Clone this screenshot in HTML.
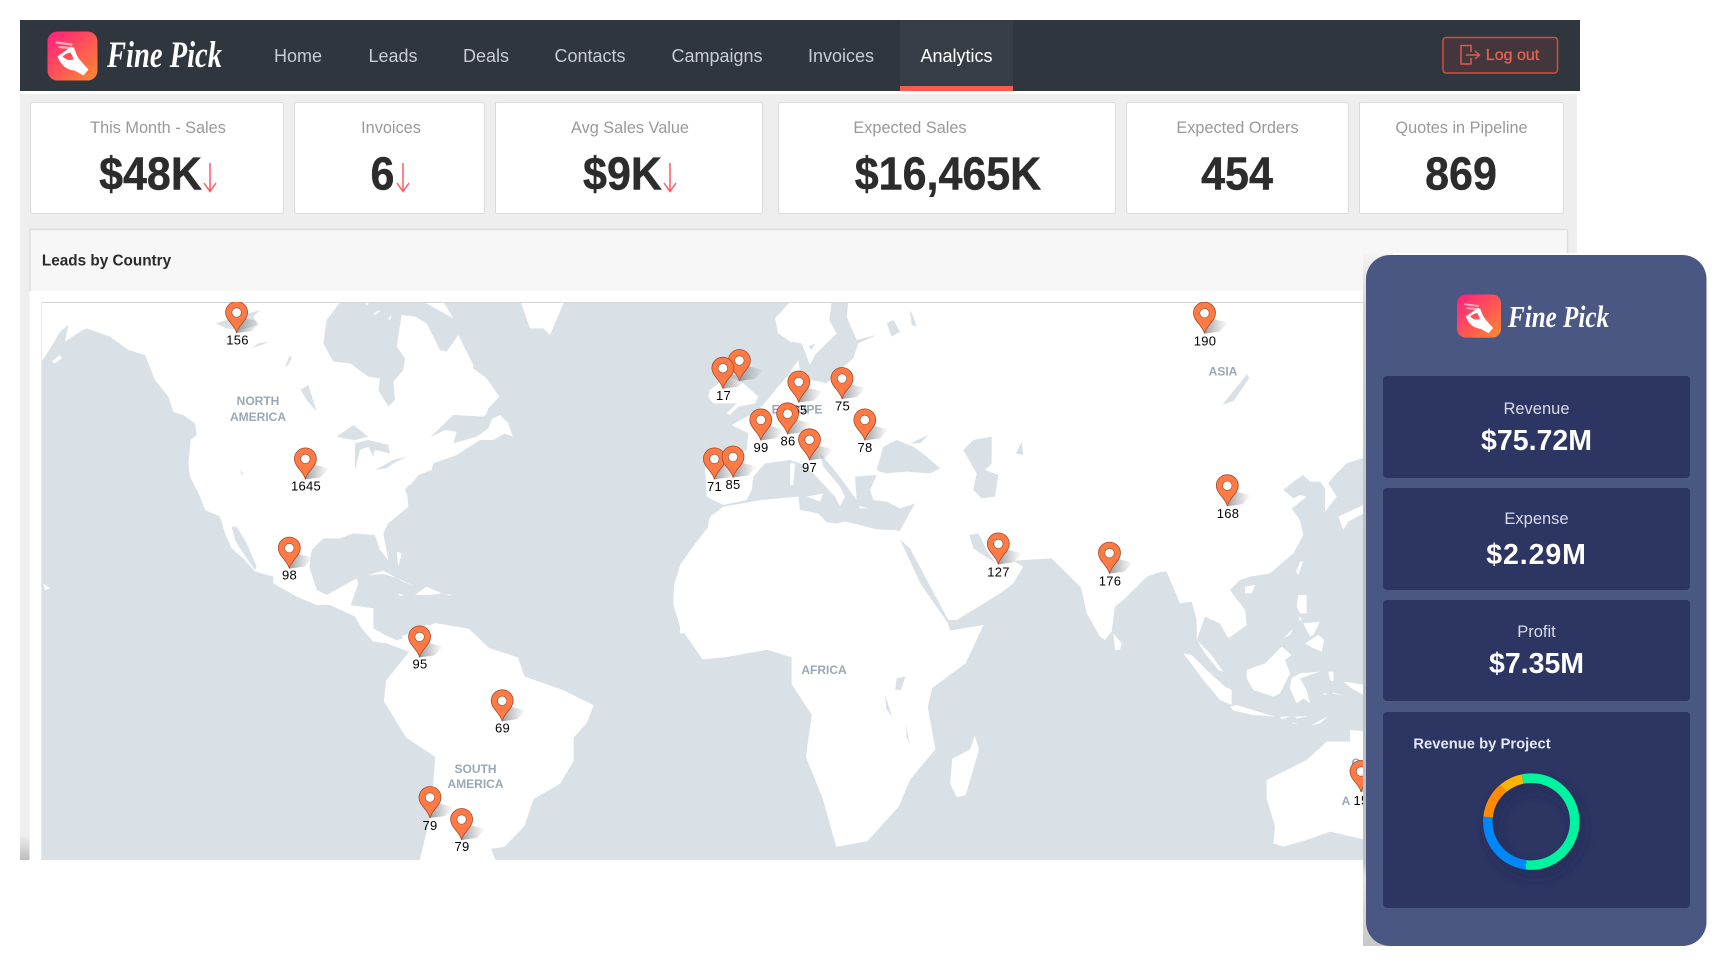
<!DOCTYPE html>
<html>
<head>
<meta charset="utf-8">
<title>Fine Pick</title>
<style>
html,body{margin:0;padding:0;background:#fff}
body{width:1722px;height:965px;position:relative;overflow:hidden;font-family:"Liberation Sans",sans-serif}
.a{position:absolute}
.t{position:absolute;transform:translate(-50%,-50%);white-space:nowrap;line-height:1}
.nav{font-size:18px;color:#c9ccd0;top:55.500px}
.card{position:absolute;top:102px;height:110px;background:#fff;border:1px solid #dcdcdc;border-radius:2px}
.lab{font-size:16.3px;color:#999;top:128px}
.val{font-size:43px;font-weight:bold;color:#2c2c2c;top:175px;transform:translate(-50%,-50%) scaleY(1.08);-webkit-text-stroke:.4px #2c2c2c}
.pc{position:absolute;left:1383px;width:307px;background:#2d3563;border-radius:4px}
.pl{font-size:16.5px;color:#d8dbe8;left:1536.5px}
.pv{font-size:28.5px;font-weight:bold;color:#fff;left:1536.5px}
svg text{font-family:"Liberation Sans",sans-serif}
</style>
</head>
<body>
<!-- page bg -->
<div class="a" style="left:20px;top:94px;width:1557px;height:766px;background:#eee"></div>
<div class="a" style="left:20px;top:835px;width:22px;height:25px;background:linear-gradient(to top,#bdbdbd,#eee)"></div>

<!-- nav -->
<div class="a" style="left:20px;top:20px;width:1560px;height:71px;background:#30363e"></div>
<div class="a" style="left:900px;top:20px;width:113px;height:66px;background:#373d47"></div>
<div class="a" style="left:900px;top:86px;width:113px;height:5px;background:#fb5a4c"></div>

<svg class="a" style="left:0;top:0" width="1722" height="965" viewBox="0 0 1722 965">
  <defs>
    <linearGradient id="lg" x1="0" y1="0" x2="1" y2="1">
      <stop offset="0" stop-color="#ff1c80"/><stop offset="1" stop-color="#ff8a2e"/>
    </linearGradient>
    <linearGradient id="sh" x1="0" y1="0" x2="1" y2="0">
      <stop offset="0" stop-color="#7a7f84" stop-opacity=".75"/><stop offset="1" stop-color="#9a9a9a" stop-opacity="0"/>
    </linearGradient>
    <linearGradient id="strip" x1="0" y1="0" x2="0" y2="1">
      <stop offset="0" stop-color="#f4f4f4"/><stop offset=".08" stop-color="#d4d4d4"/><stop offset=".4" stop-color="#bcbfc2"/><stop offset=".88" stop-color="#bcbfc2"/><stop offset=".9" stop-color="#e2e2e2"/><stop offset="1" stop-color="#c8c8c8"/>
    </linearGradient>
    <g id="hand">
      <rect x="0" y="0" width="50" height="49" rx="10" fill="url(#lg)"/>
      <path d="M9,11 L24,13 M12,15.500 L26,17" stroke="#fff" stroke-opacity=".55" stroke-width="2.200" fill="none" stroke-linecap="round"/>
      <path fill-rule="evenodd" fill="#fff" d="M10,25 L24,15 Q27,17 28,20 Q29,24 32,28 L41,38 L36,44 L27,39 Q15,38 10,25 Z M15,25 Q20,30 26,28 Q25,24 23,21 Q18,22 15,25 Z"/>
    </g>
    <g id="pin">
      <path d="M0,0 L7,-15 L24,-11 L15,-2 Z" fill="url(#sh)"/>
      <path d="M0,0 C-1.500,-8 -11,-12.500 -11,-20.500 A11,11 0 1 1 11,-20.500 C11,-12.500 1.500,-8 0,0 Z" fill="#ff7a45" stroke="#a3492c" stroke-width=".8"/>
      <circle cx="0" cy="-20.500" r="4.700" fill="#fff" stroke="#8a4a30" stroke-width=".6"/>
    </g>
    <clipPath id="mc"><rect x="41.500" y="302" width="1321.500" height="558"/></clipPath>
  </defs>

  <!-- logo -->
  <use href="#hand" x="47.500" y="31.500"/>
  <text x="107" y="67" font-size="37" fill="#fff" textLength="115" lengthAdjust="spacingAndGlyphs" style="font-family:'Liberation Serif',serif;font-style:italic;font-weight:bold">Fine Pick</text>

  <!-- logout -->
  <rect x="1443" y="37.500" width="114.500" height="35.500" rx="3" fill="#43363c" stroke="#d14d3d" stroke-width="1.500"/>
  <path d="M1471,52 V45.500 H1461 V64 H1471 V58 M1466,55 H1479 M1475,51 L1479.500,55 L1475,59" fill="none" stroke="#e05a49" stroke-width="1.500"/>

  <!-- leads panel -->
  <rect x="29.500" y="229" width="1538" height="640" fill="#fff"/>
  <rect x="29.500" y="229" width="1538" height="62" fill="#f7f7f7"/>
  <path d="M30,291 V229.500 H1567.500 V291" fill="none" stroke="#dedede" stroke-width="1.500"/>
  <rect x="20" y="860" width="1343" height="105" fill="#fff"/>

  <!-- map -->
  <g clip-path="url(#mc)">
    <rect x="41.500" y="302" width="1321.500" height="558" fill="#d9e0e6"/>

    <!-- North America -->
    <g transform="translate(40,300) scale(.33333)" fill="#fff">
      <path d="M5,0 L905,0 L860,60 L850,130 L880,185 L930,190 L985,230 L1020,235 L1015,270 L1045,320 L1065,300 L1060,245 L1090,210 L1095,175 L1070,140 L1085,45 L1125,50 L1160,70 L1200,150 L1220,155 L1255,105 L1300,195 L1300,205 L1340,235 L1378,290 L1345,325 L1330,370 L1380,345 L1405,370 L1418,410 L1395,400 L1360,420 L1320,420 L1250,465 L1180,490 L1175,510 L1135,525 L1100,570 L1105,620 L1045,670 L1030,700 L1045,780 L1020,750 L1005,705 L940,700 L900,715 L850,715 L815,750 L808,800 L830,870 L860,885 L905,860 L950,835 L955,850 L932,915 L1000,925 L1000,985 L1045,1010 L1070,1020 L1115,1010 L1165,970 L1120,1060 L1040,1030 L1000,1025 L965,985 L945,950 L870,915 L830,915 L770,890 L700,850 L700,830 L645,815 L610,775 L575,745 L555,700 L540,650 L495,630 L480,590 L450,530 L445,490 L452,420 L470,405 L465,370 L400,335 L385,290 L345,240 L315,165 L265,150 L210,110 L140,85 L120,95 L75,125 L85,75 L60,95 L40,130 L5,185 Z"/>
      <path d="M1440,0 L1575,0 L1530,105 L1510,85 L1470,85 Z"/>
      <path d="M1150,5 L1210,5 L1240,55 Z M975,5 L990,5 L980,18 Z"/>
      <path d="M1000,40 L1020,30 L1020,35 L1005,45 Z M1045,55 L1055,45 L1050,62 Z"/>
      <path d="M35,185 L60,165 L65,175 L45,190 Z M10,850 L30,865 L15,870 Z"/>
      <path d="M985,825 L1030,812 L1090,845 L1125,860 L1075,835 L1030,822 Z M1125,885 L1160,860 L1205,880 L1170,885 Z M1075,880 L1095,885 L1080,888 Z M1220,882 L1240,885 L1225,886 Z M1070,755 L1085,760 L1075,800 Z"/>
      <g fill="#d9e0e6">
        <path d="M575,680 L590,680 L620,730 L650,800 L645,810 L600,745 L585,720 Z"/>
        <path d="M527,70 L560,60 L660,30 L640,50 L655,75 L600,90 L560,85 Z M635,145 L690,125 L655,130 Z"/>
        <path d="M735,200 L750,165 L755,175 L745,195 Z M770,255 L780,270 L805,255 L830,335 L800,300 L785,275 Z"/>
        <path d="M325,260 L340,258 L350,300 L335,285 Z M395,335 L430,345 L465,370 L470,405 L440,365 Z M600,510 L612,525 L603,522 Z"/>
        <path d="M890,410 L940,375 L985,410 L945,420 L910,415 Z"/>
        <path d="M945,430 L985,420 L1045,435 L1050,460 L1005,450 L1000,470 L985,440 L960,450 L945,510 Z"/>
        <path d="M1005,510 L1060,480 L1100,470 L1060,490 L1040,505 Z"/>
        <path d="M1170,412 L1240,345 L1330,350 L1375,310 L1345,385 L1310,410 L1240,430 L1250,395 L1215,390 Z"/>
        <path d="M1095,570 L1110,550 L1105,590 Z"/>
      </g>
    </g>

    <!-- South America, Africa south -->
    <g transform="translate(0,290) scale(.44643,.38270)" fill="#fff">
      <path d="M900,905 L975,870 L1050,885 L1095,935 L1160,960 L1175,1010 L1260,1045 L1330,1085 L1315,1130 L1285,1170 L1285,1230 L1255,1290 L1195,1330 L1175,1400 L1130,1455 L1100,1460 L1110,1490 L940,1490 L965,1370 L975,1220 L910,1170 L860,1075 L865,1020 L920,940 Z"/>
    </g>
    <g transform="translate(680,290) scale(.44643,.38270)" fill="#fff">
      <path d="M500,630 L515,660 L490,645 L540,770 L600,870 L605,890 L680,875 L640,975 L565,1040 L555,1090 L572,1200 L515,1280 L490,1350 L420,1440 L350,1455 L320,1330 L282,1220 L295,1110 L250,1030 L250,960 L195,940 L100,960 L50,965 L0,880 L-15,820 L-13,770 L0,720 L60,640 L65,600 L110,565 L200,550 L265,595 L350,610 L370,605 L440,625 Z"/>
      <path d="M660,1165 L670,1200 L640,1320 L620,1325 L605,1290 L610,1225 L650,1200 Z"/>
      <g fill="#d9e0e6">
        <path d="M485,1015 L505,1010 L495,1045 L482,1045 Z M460,1060 L475,1115 L462,1095 Z M505,1130 L515,1190 L508,1170 Z"/>
      </g>
    </g>

    <!-- Europe, west Asia -->
    <g transform="translate(680,300) scale(.33333)" fill="#fff">
      <path d="M0,795 L35,745 L85,680 L90,650 L130,620 L245,600 L355,590 L360,630 L415,640 L470,700 L490,680 L560,690 L650,690 L660,720 L680,800 L730,880 L770,960 L770,1000 L0,1000 Z"/>
      <path d="M505,6 L1260,6 L1260,880 L1210,870 L1150,810 L1115,775 L1000,782 L1030,800 L1000,850 L960,880 L830,960 L805,960 L735,830 L690,745 L650,710 L705,610 L660,625 L620,605 L580,600 L570,570 L590,525 L525,530 L530,600 L505,565 L455,500 L420,460 L430,500 L480,560 L495,590 L480,620 L465,590 L400,520 L360,490 L330,480 L255,490 L220,530 L215,570 L200,600 L130,615 L80,590 L75,500 L105,500 L200,450 L205,400 L155,375 L210,345 L245,320 L270,290 L290,265 L330,220 L355,215 L395,240 L440,250 L490,200 L520,175 L535,130 L590,105 L530,120 L500,50 Z"/>
      <path d="M285,55 L330,6 L455,6 L448,60 L470,100 L430,140 L405,165 L390,195 L365,130 L330,125 L295,100 Z"/>
      <path d="M330,215 L355,180 L360,215 Z"/>
      <path d="M90,270 L130,240 L150,230 L190,250 L235,290 L225,310 L175,320 L150,345 L140,340 L170,310 L100,310 L85,290 Z"/>
      <path d="M330,490 L345,490 L340,555 L330,555 Z M380,590 L430,580 L420,605 Z M535,618 L570,625 L540,625 Z"/>
      <g fill="#d9e0e6">
        <path d="M590,510 L610,440 L650,420 L700,440 L740,470 L780,505 L750,520 L680,515 L620,520 L600,515 Z"/>
        <path d="M690,430 L745,405 L720,430 Z"/>
        <path d="M850,450 L880,420 L935,410 L935,490 L915,510 L955,525 L945,590 L905,595 L880,570 L890,520 Z"/>
        <path d="M1008,460 L1025,425 L1030,465 Z M1215,440 L1260,415 L1225,430 Z"/>
        <path d="M868,705 L895,700 L925,760 L950,790 L925,775 L880,745 Z"/>
        <path d="M620,70 L640,60 L660,95 L635,110 Z M690,30 L700,50 L710,80 L695,75 Z M385,140 L405,130 L395,150 Z"/>
      </g>
    </g>

    <!-- Northern Asia fill -->
    <rect x="1095" y="302" width="268" height="145" fill="#fff"/>
    <g transform="translate(680,290) scale(.44643,.38270)" fill="#d9e0e6">
      <path d="M1270,220 L1215,300 L1240,290 L1275,230 Z"/>
    </g>

    <!-- East Asia / Oceania -->
    <g transform="translate(1080,440) scale(.33333)" fill="#fff">
      <path d="M0,430 L20,520 L60,590 L75,600 L95,575 L105,500 L130,480 L200,410 L245,395 L260,395 L300,490 L335,485 L350,540 L350,600 L375,530 L420,550 L445,595 L500,555 L495,510 L450,450 L480,420 L510,410 L570,400 L640,340 L670,285 L660,240 L635,205 L680,170 L660,165 L640,175 L610,150 L640,125 L670,105 L690,125 L720,125 L735,145 L735,215 L770,170 L745,130 L760,110 L800,70 L860,50 L860,-5 L0,-5 Z"/>
      <path d="M350,600 L390,640 L430,695 L415,690 L375,640 Z"/>
      <path d="M310,640 L335,645 L380,690 L435,740 L455,750 L455,795 L420,780 L370,720 L340,680 Z"/>
      <path d="M450,800 L470,795 L585,830 L520,825 L460,812 Z M600,830 L630,830 L605,838 Z M645,830 L685,828 L650,836 Z M635,845 L655,855 L640,850 Z M695,855 L745,828 L720,850 Z"/>
      <path d="M500,690 L555,670 L605,620 L635,645 L615,660 L630,700 L600,760 L580,770 L520,750 L500,715 Z"/>
      <path d="M635,715 L660,700 L720,695 L660,715 L680,750 L690,790 L670,775 L650,790 L630,745 Z"/>
      <path d="M655,465 L680,465 L680,520 L660,520 L650,500 Z M655,530 L665,535 L660,545 Z M670,550 L720,545 L700,585 L690,590 Z M675,610 L715,585 L733,600 L725,635 L700,625 Z"/>
      <path d="M660,365 L670,365 L655,405 L648,395 Z M495,440 L525,435 L515,460 L495,460 Z"/>
      <path d="M775,230 L860,190 L860,215 L805,245 L790,270 Z"/>
      <path d="M610,595 L640,565 L630,585 Z M745,695 L760,695 L760,725 L750,720 Z M790,725 L860,735 L860,770 L815,745 Z M730,760 L745,762 L730,765 Z M755,757 L790,765 L760,762 Z"/>
      <path d="M860,875 L810,870 L810,905 L740,905 L680,960 L600,1000 L560,1020 L560,1075 L585,1160 L580,1210 L610,1220 L680,1200 L750,1175 L860,1200 Z"/>
      <path d="M100,580 L125,610 L120,630 L105,630 Z"/>
    </g>

    <line x1="41.500" y1="302.500" x2="1363" y2="302.500" stroke="#d3d6d9"/>
    <line x1="41.500" y1="302" x2="41.500" y2="860" stroke="#d3d6d9"/>

    <!-- continent labels -->
    <g font-size="12" font-weight="bold" fill="#9aa8b5" text-anchor="middle">
      <text x="258" y="405">NORTH</text><text x="258" y="421">AMERICA</text>
      <text x="475.500" y="773">SOUTH</text><text x="475.500" y="788">AMERICA</text>
      <text x="797" y="413.500">EUROPE</text>
      <text x="824" y="674">AFRICA</text>
      <text x="1223" y="375.500">ASIA</text>
      <text x="1346" y="805">A</text><text x="1356" y="767">O</text>
    </g>
    <!-- pins -->
    <use href="#pin" x="236.600" y="333"/>
    <use href="#pin" x="305.400" y="479.400"/>
    <use href="#pin" x="289.300" y="568.600"/>
    <use href="#pin" x="419.600" y="657.400"/>
    <use href="#pin" x="502.200" y="721.300"/>
    <use href="#pin" x="430" y="818"/>
    <use href="#pin" x="461.600" y="840"/>
    <use href="#pin" x="1204.500" y="333.600"/>
    <use href="#pin" x="739.400" y="381"/>
    <use href="#pin" x="722.900" y="388.700"/>
    <use href="#pin" x="798.800" y="402.500"/>
    <use href="#pin" x="842" y="399"/>
    <use href="#pin" x="864.800" y="440.400"/>
    <use href="#pin" x="760.800" y="440.400"/>
    <g font-size="13" fill="#000" text-anchor="middle" letter-spacing=".3">
      <text x="800" y="414.500">65</text>
    </g>
    <use href="#pin" x="787.600" y="434.300"/>
    <use href="#pin" x="809.500" y="460.300"/>
    <use href="#pin" x="714.400" y="479.400"/>
    <use href="#pin" x="733" y="477.500"/>
    <use href="#pin" x="1227.300" y="506.200"/>
    <use href="#pin" x="998.300" y="564.400"/>
    <use href="#pin" x="1109.500" y="573.600"/>
    <use href="#pin" x="1361" y="792"/>
    <g font-size="13" fill="#000" text-anchor="middle" letter-spacing=".3">
      <text x="237.500" y="344.500">156</text>
      <text x="306" y="490.500">1645</text>
      <text x="289.500" y="579.500">98</text>
      <text x="420" y="668.500">95</text>
      <text x="502.500" y="732.500">69</text>
      <text x="430" y="830">79</text>
      <text x="462" y="851">79</text>
      <text x="1205" y="345.500">190</text>
      <text x="723.500" y="400">17</text>
      <text x="842.500" y="410.500">75</text>
      <text x="761" y="452">99</text>
      <text x="788" y="445.500">86</text>
      <text x="865" y="452">78</text>
      <text x="809.500" y="472">97</text>
      <text x="714.500" y="491">71</text>
      <text x="733" y="489">85</text>
      <text x="1228" y="518">168</text>
      <text x="998.500" y="576.500">127</text>
      <text x="1110" y="585.500">176</text>
      <text x="1361" y="805">15</text>
    </g>
  </g>

  <!-- phone panel -->
  <rect x="1363" y="253" width="359" height="712" fill="#fff"/>
  <rect x="1363" y="253" width="30" height="693" fill="url(#strip)"/>
  <rect x="1366" y="255" width="340.500" height="691" rx="24" fill="#4a5783"/>
</svg>

<!-- leads title -->
<div class="t" style="left:106.500px;top:261px;font-size:15.300px;font-weight:bold;color:#2a2a2a">Leads by Country</div>

<!-- nav text -->
<div class="t nav" style="left:298px">Home</div>
<div class="t nav" style="left:393px">Leads</div>
<div class="t nav" style="left:486px">Deals</div>
<div class="t nav" style="left:590px">Contacts</div>
<div class="t nav" style="left:717px">Campaigns</div>
<div class="t nav" style="left:841px">Invoices</div>
<div class="t nav" style="left:956.500px;color:#fff">Analytics</div>
<div class="t" style="left:1512.500px;top:55.500px;font-size:16px;color:#e8604e;-webkit-text-stroke:.35px #e8604e">Log out</div>

<!-- cards -->
<div class="card" style="left:30px;width:252px"></div>
<div class="card" style="left:294px;width:189px"></div>
<div class="card" style="left:495px;width:266px"></div>
<div class="card" style="left:778px;width:336px"></div>
<div class="card" style="left:1126px;width:221px"></div>
<div class="card" style="left:1359px;width:203px"></div>

<div class="t lab" style="left:158px">This Month - Sales</div>
<div class="t lab" style="left:391px">Invoices</div>
<div class="t lab" style="left:630px">Avg Sales Value</div>
<div class="t lab" style="left:910px">Expected Sales</div>
<div class="t lab" style="left:1237.500px">Expected Orders</div>
<div class="t lab" style="left:1461.500px">Quotes in Pipeline</div>

<div class="t val" style="left:150.500px">$48K</div>
<div class="t val" style="left:382.500px">6</div>
<div class="t val" style="left:622.500px">$9K</div>
<div class="t val" style="left:948px">$16,465K</div>
<div class="t val" style="left:1237px">454</div>
<div class="t val" style="left:1461px">869</div>

<svg class="a" style="left:0;top:0" width="1722" height="965" viewBox="0 0 1722 965" fill="none" stroke="#ff5a5f" stroke-width="1.500">
  <path d="M210,163 V191 M204,183 L210,191.500 L216,183"/>
  <path d="M403,163 V191 M397,183 L403,191.500 L409,183"/>
  <path d="M670,163 V191 M664,183 L670,191.500 L676,183"/>
</svg>

<!-- panel content -->
<svg class="a" style="left:0;top:0" width="1722" height="965" viewBox="0 0 1722 965">
  <g transform="translate(1457,294.500) scale(.88,.88)"><use href="#hand"/></g>
  <text x="1508" y="327" font-size="31" fill="#fff" textLength="101" lengthAdjust="spacingAndGlyphs" style="font-family:'Liberation Serif',serif;font-style:italic;font-weight:bold">Fine Pick</text>
</svg>
<div class="pc" style="top:375.500px;height:102.500px"></div>
<div class="pc" style="top:487.500px;height:102px"></div>
<div class="pc" style="top:599.700px;height:101.700px"></div>
<div class="pc" style="top:711.600px;height:196.400px"></div>

<div class="t pl" style="top:408.500px">Revenue</div>
<div class="t pv" style="top:441px">$75.72M</div>
<div class="t pl" style="top:518.500px">Expense</div>
<div class="t pv" style="top:554.500px;letter-spacing:.9px">$2.29M</div>
<div class="t pl" style="top:632px">Profit</div>
<div class="t pv" style="top:664px">$7.35M</div>
<div class="t" style="left:1482px;top:745px;font-size:14.800px;font-weight:bold;color:#e6e8f0">Revenue by Project</div>

<svg class="a" style="left:0;top:0" width="1722" height="965" viewBox="0 0 1722 965">
  <defs><filter id="b" x="-50%" y="-50%" width="200%" height="200%"><feGaussianBlur stdDeviation="6"/></filter></defs>
  <g transform="translate(1531.300,821.600)" fill="none" stroke-width="9.500">
    <circle cx="4" cy="7" r="43.500" stroke="#1c2450" stroke-opacity=".6" filter="url(#b)" stroke-width="10"/>
    <path d="M-8.670,-42.630 A43.500,43.500 0 1 1 -5.300,43.180" stroke="#00f39e"/>
    <path d="M-5.300,43.180 A43.500,43.500 0 0 1 -43.260,-4.550" stroke="#0088fb"/>
    <path d="M-43.260,-4.550 A43.500,43.500 0 0 1 -27.960,-33.320" stroke="#ff8c00"/>
    <path d="M-27.960,-33.320 A43.500,43.500 0 0 1 -8.670,-42.630" stroke="#ffb300"/>
  </g>
</svg>
</body>
</html>
